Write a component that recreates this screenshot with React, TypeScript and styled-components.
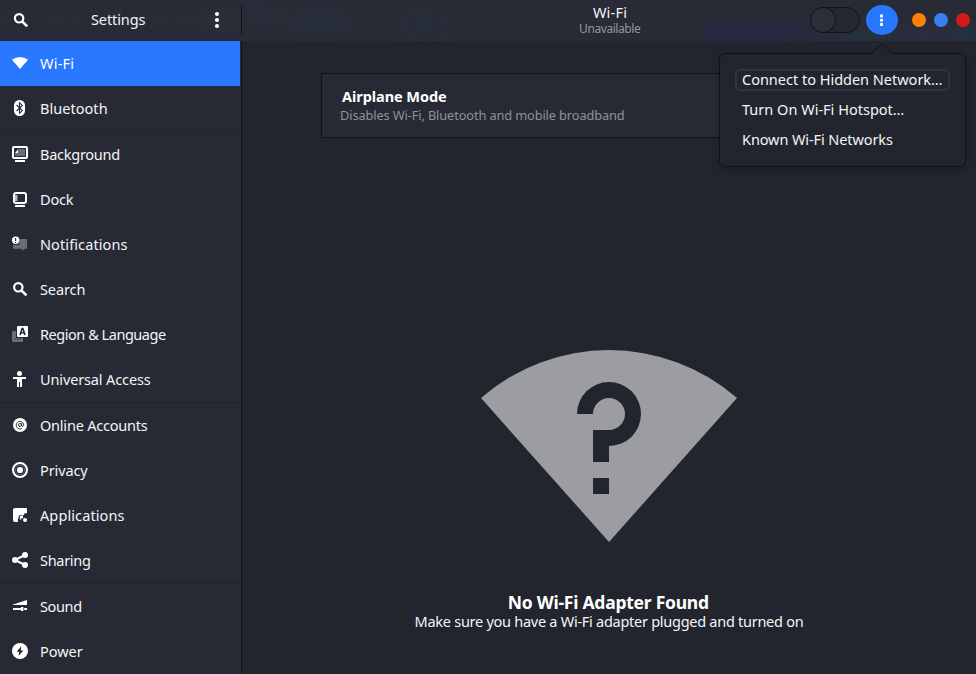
import React from 'react';
import styled, { createGlobalStyle, css } from 'styled-components';

const GlobalStyle = createGlobalStyle`
  * { box-sizing: border-box; }
  body {
    margin: 0;
    overflow: hidden;
    background: #22252e;
    color: #f4f5f7;
    font-family: "Noto Sans", "Open Sans", sans-serif;
    font-size: 14.5px;
  }
`;

const Window = styled.div`
  position: relative;
  display: flex;
  flex-direction: column;
  width: 976px;
  height: 674px;
  background: #22252e;
`;

const HeaderBar = styled.header`
  display: flex;
  flex: 0 0 41px;
  background:
    linear-gradient(90deg, #272942, #272940 70%, #282a38) 707px 21px / 105px 20px no-repeat,
    radial-gradient(ellipse 34px 24px at 256px 14px, rgba(38, 47, 58, 0.75), transparent),
    radial-gradient(ellipse 60px 26px at 318px 22px, rgba(38, 47, 58, 0.9), transparent),
    radial-gradient(ellipse 52px 36px at 425px 26px, rgba(38, 46, 57, 0.9), transparent),
    radial-gradient(ellipse 40px 26px at 215px 20px, rgba(40, 46, 57, 0.9), transparent),
    radial-gradient(ellipse 46px 18px at 870px 34px, rgba(38, 50, 62, 0.9), transparent),
    radial-gradient(ellipse 26px 14px at 925px 38px, rgba(46, 44, 76, 0.7), transparent),
    radial-gradient(ellipse 30px 18px at 960px 32px, rgba(38, 50, 62, 0.9), transparent),
    linear-gradient(#282b39, #282b39) 812px 21px / 164px 20px no-repeat,
    #282a35;
`;

const SidebarHeader = styled.div`
  position: relative;
  display: flex;
  flex: 0 0 241px;
  align-items: flex-start;
`;

const GhostText = styled.span<{ $left: number }>`
  position: absolute;
  left: ${(p) => p.$left}px;
  top: 3px;
  line-height: 26px;
  letter-spacing: 0.4px;
  color: #2d2f3a;
`;

const HeaderSearch = styled.svg`
  position: relative;
  width: 16px;
  height: 16px;
  margin: 12px 0 0 13px;
`;

const SidebarTitle = styled.h1`
  position: relative;
  flex: 1;
  margin: 0 0 0 62px;
  font-size: 14.5px;
  font-weight: 400;
  line-height: 39px;
  letter-spacing: -0.1px;
`;

const MenuDots = styled.svg`
  position: relative;
  width: 6px;
  height: 18px;
  margin: 11px 21px 0 0;
`;

const HeaderDivider = styled.div`
  width: 1px;
  height: 30px;
  margin-top: 5px;
  background: #13151b;
`;

const PanelHeader = styled.div`
  display: grid;
  flex: 1;
  grid-template-columns: 1fr auto 1fr;
`;

const PanelTitles = styled.div`
  grid-column: 2;
  padding: 4px 0 0 1.4px;
  text-align: center;
`;

const PanelTitle = styled.div`
  padding-left: 0.6px;
  line-height: 16px;
  letter-spacing: 0.2px;
`;

const PanelSubtitle = styled.div`
  font-size: 12px;
  line-height: 17px;
  letter-spacing: -0.42px;
  color: #94959b;
`;

const HeaderControls = styled.div`
  display: flex;
  align-items: center;
  justify-content: flex-end;
  height: 40px;
  padding-right: 6px;
`;

const Toggle = styled.div`
  width: 50px;
  height: 26px;
  margin-right: 6px;
  border: 1px solid #121318;
  border-radius: 13px;
  background: #252731;
`;

const ToggleKnob = styled.div`
  width: 26px;
  height: 26px;
  margin: -1px;
  border: 1px solid #121318;
  border-radius: 50%;
  background: #2c2f3a;
`;

const MenuButton = styled.div`
  display: flex;
  align-items: center;
  justify-content: center;
  width: 32px;
  height: 30px;
  margin-right: 14px;
  border-radius: 50%;
  background: #2777ff;
`;

const WindowButtons = styled.div`
  display: flex;
  gap: 8px;
`;

const WindowButton = styled.span<{ $color: string }>`
  width: 14px;
  height: 14px;
  border-radius: 50%;
  background: ${(p) => p.$color};
`;

const Body = styled.div`
  display: flex;
  flex: 1;
  min-height: 0;
`;

const Sidebar = styled.nav`
  flex: 0 0 242px;
  padding-right: 1px;
  border-right: 1px solid #13151b;
  background: #272a34;
`;

const NavGroup = styled.div`
  & + & {
    border-top: 1px solid #22242d;
  }
`;

const NavRow = styled.div<{ $active?: boolean }>`
  display: flex;
  align-items: center;
  height: 45px;
  padding-left: 12px;
  ${(p) => p.$active && css`background: #2777ff; color: #fff;`}
`;

const NavIcon = styled.svg`
  flex: none;
  width: 16px;
  height: 16px;
  margin: 0 12px 1px 0;
`;

const NavLabel = styled.span<{ $tracking: number }>`
  line-height: 45px;
  white-space: nowrap;
  letter-spacing: ${(p) => p.$tracking}px;
`;

const Content = styled.main`
  display: flex;
  flex: 1;
  flex-direction: column;
  align-items: center;
  padding-top: 32px;
`;

const SettingCard = styled.section`
  width: 576px;
  height: 65px;
  padding: 13px 0 0 18px;
  border: 1px solid #121419;
  background: #272a34;
`;

const CardTitle = styled.div`
  padding-left: 2px;
  font-weight: 700;
  line-height: 18px;
  letter-spacing: -0.06px;
  color: #fff;
`;

const CardText = styled.div`
  margin-top: 1px;
  font-size: 12.8px;
  line-height: 18px;
  letter-spacing: -0.12px;
  color: #909197;
`;

const StatusIcon = styled.svg`
  width: 256px;
  height: 192px;
  margin: 212px 0 50px;
`;

const StatusTitle = styled.h2`
  margin: 0;
  padding-right: 1.4px;
  font-size: 17.5px;
  font-weight: 700;
  line-height: 20px;
  letter-spacing: -0.24px;
  color: #fff;
`;

const StatusText = styled.p`
  margin: 0;
  line-height: 18px;
  letter-spacing: -0.268px;
`;

const Popover = styled.div`
  position: absolute;
  left: 719px;
  top: 53px;
  display: flex;
  flex-direction: column;
  gap: 8px;
  width: 247px;
  height: 114px;
  padding: 15px;
  border: 1px solid #101217;
  border-radius: 6px;
  background: #22252e;
  box-shadow: 0 2px 6px rgba(0, 0, 0, 0.28);
`;

const PopoverArrow = styled.svg`
  position: absolute;
  left: 150px;
  top: -12px;
  width: 24px;
  height: 13px;
`;

const MenuItem = styled.div<{ $tracking: number; $focused?: boolean }>`
  height: 22px;
  padding-left: 5px;
  border: 2px solid ${(p) => (p.$focused ? '#31343e' : 'transparent')};
  border-radius: 5px;
  line-height: 17px;
  white-space: nowrap;
  letter-spacing: ${(p) => p.$tracking}px;
`;

const magnifier = (
  <g fill="none" stroke="#fff">
    <circle cx="6.1" cy="6.1" r="4.2" strokeWidth="2.2" />
    <path d="M9.2 9.2L14.2 14.2" strokeWidth="2.7" />
  </g>
);

const dim = '#6b6d74';
const panel = '#272a34';

const icons: Record<string, React.ReactNode> = {
  wifi: <path d="M8 14L0 4.7Q3.6 2 8 2T16 4.7Z" fill="#fff" />,
  bluetooth: (
    <>
      <rect x="2" y="0" width="11" height="16" rx="5.3" fill="#fff" />
      <path d="M4.6 5L10.3 10.6L7.5 13.3V2.7L10.3 5.4L4.6 11" fill="none" stroke={panel} strokeWidth="1.1" />
    </>
  ),
  background: (
    <>
      <rect x="1" y="1" width="14" height="11" rx="1" fill="none" stroke="#fff" strokeWidth="2" />
      <path d="M6 3H13V10H3V7H6Z" fill={dim} />
      <path d="M3 7L6 3.6V7Z" fill="#fff" />
      <rect x="3" y="14" width="10" height="2" fill="#fff" />
    </>
  ),
  dock: (
    <>
      <rect x="2" y="2" width="12" height="10" rx="2" fill="none" stroke="#fff" strokeWidth="2" />
      <rect x="3" y="4" width="2" height="6" fill="#b5b6ba" />
      <rect x="5" y="4" width="1" height="6" fill={dim} />
      <rect x="3" y="14" width="10" height="2" rx="0.5" fill="#fff" />
    </>
  ),
  notifications: (
    <>
      <path d="M8 3H15V12.8H12.5L11 14.8L9.5 12.8H1V9H7Z" fill={dim} />
      <circle cx="3.7" cy="4.3" r="3.7" fill="#fff" />
      <path d="M3.6 2V5M3.6 6V7" stroke={panel} strokeWidth="1.2" />
    </>
  ),
  search: <g transform="translate(0.2 0.2)">{magnifier}</g>,
  region: (
    <>
      <path d="M4 5H1.2Q0 5 0 6.2V14.8Q0 16 1.2 16H11V12H4Z" fill={dim} />
      <path d="M3 13.5V12M6 14V12M8.5 13.5V12" stroke={panel} strokeWidth="0.8" />
      <rect x="5" y="0" width="11" height="11" rx="1" fill="#fff" />
      <path d="M8 9L10.1 2.6H10.9L13 9M8.7 6.8H12.3" fill="none" stroke={panel} strokeWidth="1.6" />
    </>
  ),
  access: (
    <>
      <circle cx="7.5" cy="2.5" r="2.5" fill="#fff" />
      <path d="M1 6H14V8H10V16H8V11H7V16H5V8H1Z" fill="#fff" />
    </>
  ),
  accounts: (
    <>
      <circle cx="8" cy="8" r="7" fill="#fff" />
      <g fill="none" stroke={panel} strokeWidth="0.9">
        <circle cx="8" cy="8" r="1.5" />
        <path d="M9.6 6V8.6Q9.9 9.7 11 9.2Q12 8.2 11.6 6.9A3.8 3.8 0 1 0 10 11.4" />
      </g>
    </>
  ),
  privacy: (
    <>
      <circle cx="8" cy="8" r="7" fill="none" stroke="#fff" strokeWidth="2" />
      <circle cx="8" cy="8" r="4.8" fill="none" stroke={dim} strokeWidth="0.9" />
      <circle cx="8" cy="8" r="3.1" fill="#fff" />
    </>
  ),
  applications: (
    <>
      <path
        d="M3 1H14Q15 1 15 2V6.2H12.6Q12.2 8 11 8.4L9.8 7.8Q7.4 7.4 6.6 9.6Q6.8 11 5.9 12V15H3Q1 15 1 13V3Q1 1 3 1Z"
        fill="#fff"
      />
      <path d="M8.6 8.6H11V11.2H9.2V12.4H7.8V10Z" fill="#fff" />
      <circle cx="13" cy="13" r="2" fill="#fff" />
    </>
  ),
  sharing: (
    <g fill="#fff">
      <circle cx="3" cy="8" r="3" />
      <circle cx="13" cy="3" r="3" />
      <circle cx="13" cy="13" r="3" />
      <path d="M13 3L3 8L13 13" fill="none" stroke="#fff" strokeWidth="2" />
    </g>
  ),
  sound: (
    <g fill="#fff">
      <path d="M1 6.5L15 2V7H1Z" />
      <rect x="1" y="10" width="8" height="2" />
      <rect x="9" y="9" width="2.4" height="4" />
      <rect x="12.2" y="10" width="2.8" height="2" />
    </g>
  ),
  power: (
    <>
      <circle cx="8" cy="8" r="8" fill="#fff" />
      <path d="M9.2 3.2L4.6 8.8H7.2L6.8 12.8L11.4 7.4H8.8Z" fill={panel} />
    </>
  ),
};

type Item = { icon: string; label: string; tracking: number; active?: boolean };

const groups: Item[][] = [
  [
    { icon: 'wifi', label: 'Wi-Fi', tracking: 0.2, active: true },
    { icon: 'bluetooth', label: 'Bluetooth', tracking: 0.04 },
  ],
  [
    { icon: 'background', label: 'Background', tracking: -0.26 },
    { icon: 'dock', label: 'Dock', tracking: -0.15 },
    { icon: 'notifications', label: 'Notifications', tracking: 0.1 },
    { icon: 'search', label: 'Search', tracking: -0.1 },
    { icon: 'region', label: 'Region & Language', tracking: -0.46 },
    { icon: 'access', label: 'Universal Access', tracking: -0.13 },
  ],
  [
    { icon: 'accounts', label: 'Online Accounts', tracking: -0.22 },
    { icon: 'privacy', label: 'Privacy', tracking: -0.1 },
    { icon: 'applications', label: 'Applications', tracking: 0.1 },
    { icon: 'sharing', label: 'Sharing', tracking: -0.3 },
  ],
  [
    { icon: 'sound', label: 'Sound', tracking: -0.38 },
    { icon: 'power', label: 'Power', tracking: -0.05 },
  ],
];

export default function App() {
  return (
    <>
      <GlobalStyle />
      <Window>
        <HeaderBar>
          <SidebarHeader>
            <GhostText $left={-4} aria-hidden>es</GhostText>
            <GhostText $left={43} aria-hidden>About</GhostText>
            <GhostText $left={115} aria-hidden>Categories</GhostText>
            <HeaderSearch viewBox="0 0 16 16">
              <g transform="translate(0 0.2)">{magnifier}</g>
            </HeaderSearch>
            <SidebarTitle>Settings</SidebarTitle>
            <MenuDots viewBox="0 0 6 18" fill="#fff">
              <circle cx="3" cy="3" r="2.1" />
              <circle cx="3" cy="9" r="2.1" />
              <circle cx="3" cy="15" r="2.1" />
            </MenuDots>
          </SidebarHeader>
          <HeaderDivider />
          <PanelHeader>
            <PanelTitles>
              <PanelTitle>Wi-Fi</PanelTitle>
              <PanelSubtitle>Unavailable</PanelSubtitle>
            </PanelTitles>
            <HeaderControls>
              <Toggle><ToggleKnob /></Toggle>
              <MenuButton>
                <svg width="4" height="12" viewBox="0 0 4 12" fill="#fff">
                  <rect x="0" y="0.5" width="3" height="3" rx="0.8" />
                  <rect x="0" y="4.8" width="3" height="3" rx="0.8" />
                  <rect x="0" y="9" width="3" height="3" rx="0.8" />
                </svg>
              </MenuButton>
              <WindowButtons>
                <WindowButton $color="#ff7f00" />
                <WindowButton $color="#3a7ef2" />
                <WindowButton $color="#d41919" />
              </WindowButtons>
            </HeaderControls>
          </PanelHeader>
        </HeaderBar>
        <Body>
          <Sidebar>
            {groups.map((group) => (
              <NavGroup key={group[0].icon}>
                {group.map((item) => (
                  <NavRow key={item.icon} $active={item.active}>
                    <NavIcon viewBox="0 0 16 16">{icons[item.icon]}</NavIcon>
                    <NavLabel $tracking={item.tracking}>{item.label}</NavLabel>
                  </NavRow>
                ))}
              </NavGroup>
            ))}
          </Sidebar>
          <Content>
            <SettingCard>
              <CardTitle>Airplane Mode</CardTitle>
              <CardText>Disables Wi-Fi, Bluetooth and mobile broadband</CardText>
            </SettingCard>
            <StatusIcon viewBox="0 0 256 192">
              <path d="M0 48A195 195 0 0 1 256 48L128 192Z" fill="#9c9da1" />
              <path
                d="M96 64A32 32 0 1 1 128 96V112H112V80H128A16 16 0 1 0 112 64ZM112 128H128V144H112Z"
                fill="#22252e"
              />
            </StatusIcon>
            <StatusTitle>No Wi-Fi Adapter Found</StatusTitle>
            <StatusText>Make sure you have a Wi-Fi adapter plugged and turned on</StatusText>
          </Content>
        </Body>
        <Popover>
          <PopoverArrow viewBox="0 0 24 13">
            <path d="M1 12.5L12 1.5L23 12.5V13H1Z" fill="#22252e" />
            <path d="M1 12L12 1.2L23 12" fill="none" stroke="#101217" />
          </PopoverArrow>
          <MenuItem $tracking={-0.01} $focused>Connect to Hidden Network…</MenuItem>
          <MenuItem $tracking={0.01}>Turn On Wi-Fi Hotspot…</MenuItem>
          <MenuItem $tracking={-0.1}>Known Wi-Fi Networks</MenuItem>
        </Popover>
      </Window>
    </>
  );
}
